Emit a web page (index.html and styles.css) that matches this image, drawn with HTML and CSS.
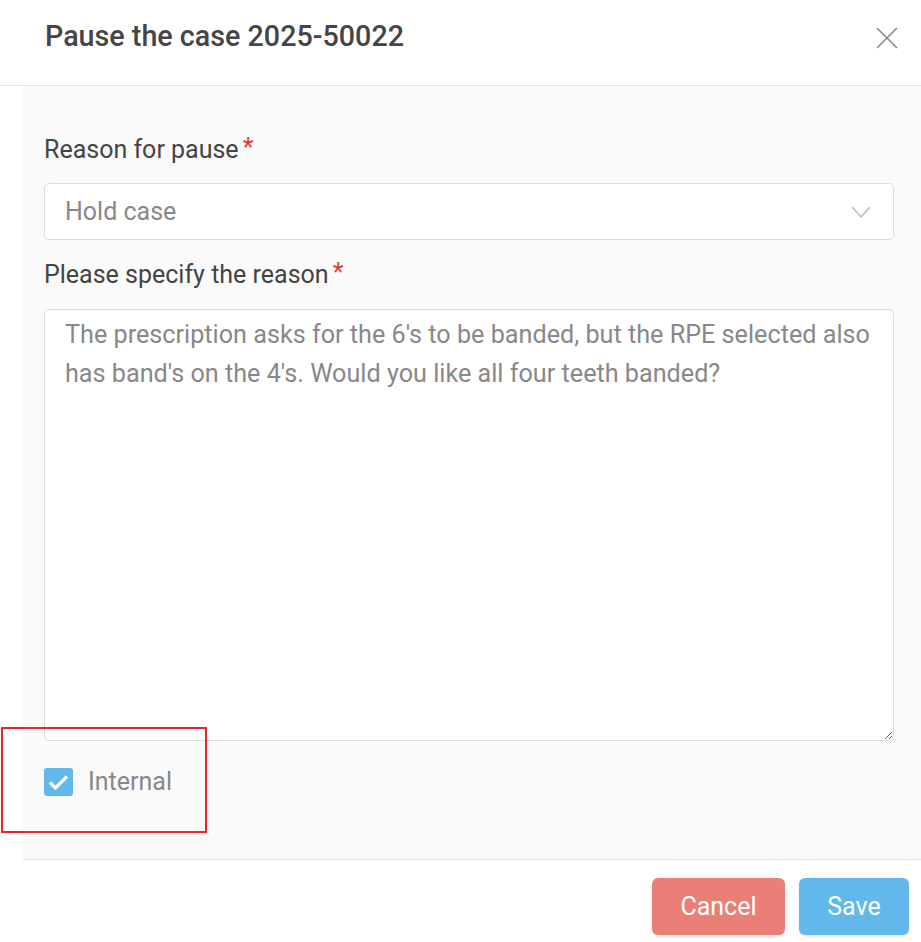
FILE: index.html
```html
<!DOCTYPE html>
<html>
<head>
<meta charset="utf-8">
<link rel="stylesheet" href="styles.css">
</head>
<body>
<div class="modal">
  <div class="header">
    <h1 class="title">Pause the case 2025-50022</h1>
    <span class="close" aria-label="Close">
      <svg width="22" height="22" viewBox="0 0 22 22"><path d="M1 1 L21 21 M21 1 L1 21" stroke="#888" stroke-width="1.6" fill="none"/></svg>
    </span>
  </div>
  <div class="body">
    <label class="label label-first">Reason for pause<span class="req">*</span></label>
    <div class="select">
      <span class="select-value">Hold case</span>
      <svg class="chevron" width="20" height="12" viewBox="0 0 20 12"><path d="M1 1 L10 11 L19 1" stroke="#bbb" stroke-width="1.4" fill="none"/></svg>
    </div>
    <label class="label label-second">Please specify the reason<span class="req">*</span></label>
    <textarea class="textarea">The prescription asks for the 6's to be banded, but the RPE selected also has band's on the 4's. Would you like all four teeth banded?</textarea>
    <div class="check-row">
      <span class="checkbox">
        <svg width="29" height="28" viewBox="0 0 29 28"><path d="M6 14.5 L11.5 20 L23 8.5" stroke="#fff" stroke-width="3.2" fill="none"/></svg>
      </span>
      <span class="check-label">Internal</span>
    </div>
  </div>
  <div class="footer">
    <button class="btn btn-cancel">Cancel</button>
    <button class="btn btn-save">Save</button>
  </div>
  <div class="highlight"></div>
</div>
</body>
</html>
```
FILE: styles.css
```css
html, body {
  margin: 0;
  padding: 0;
  background: #fff;
}
body {
  font-family: Roboto, "Liberation Sans", sans-serif;
  width: 921px;
  height: 942px;
  overflow: hidden;
}
.modal {
  position: relative;
  width: 921px;
}
.header {
  display: flex;
  align-items: flex-start;
  justify-content: space-between;
  padding: 22px 23px 0 45px;
  border-bottom: 1px solid #e6e6e6;
  box-sizing: content-box;
  height: 63px;
}
.title {
  margin: 0;
  font-size: 28.7px;
  font-weight: 500;
  color: #454545;
  line-height: 29px;
}
.close {
  display: flex;
  margin-top: 5px;
}
.body {
  margin-left: 23px;
  background: #fafafa;
  padding: 49px 27px 63px 21px;
  display: flex;
  flex-direction: column;
  border-bottom: 1px solid #e6e6e6;
}
.label {
  font-size: 25px;
  line-height: 29px;
  color: #444;
  display: block;
}
.label-first {
  margin-bottom: 19px;
}
.label-second {
  margin-top: 20px;
  margin-bottom: 20px;
}
.req {
  color: #e53935;
  margin-left: 4px;
  position: relative;
  top: -2px;
}
.select {
  height: 57px;
  box-sizing: border-box;
  border: 1px solid #dcdcdc;
  border-radius: 5px;
  background: #fff;
  display: flex;
  align-items: center;
  justify-content: space-between;
  padding: 0 22px 0 20px;
}
.select-value {
  font-size: 25px;
  color: #888;
}
.textarea {
  display: block;
  height: 432px;
  box-sizing: border-box;
  border: 1px solid #dcdcdc;
  border-radius: 5px;
  background: #fff;
  font-family: Roboto, "Liberation Sans", sans-serif;
  font-size: 25.2px;
  line-height: 38.5px;
  color: #888;
  padding: 6px 18px 6px 20px;
  margin: 0;
  resize: vertical;
  outline: none;
}
.check-row {
  margin-top: 26px;
  display: flex;
  align-items: center;
  gap: 15px;
}
.checkbox {
  width: 29px;
  height: 28px;
  border-radius: 3px;
  background: #62b8ea;
  display: flex;
}
.check-label {
  font-size: 25px;
  line-height: 29px;
  color: #888;
}
.footer {
  display: flex;
  justify-content: flex-end;
  gap: 14px;
  padding: 18px 12px 0 0;
}
.btn {
  height: 57px;
  border: none;
  border-radius: 6px;
  color: #fff;
  font-family: Roboto, "Liberation Sans", sans-serif;
  font-size: 25px;
  cursor: pointer;
  box-shadow: 0 2px 3px rgba(0, 0, 0, 0.08);
}
.btn-cancel {
  width: 133px;
  background: #ea7f77;
}
.btn-save {
  width: 110px;
  background: #62b8ea;
}
.highlight {
  position: absolute;
  left: 1px;
  top: 727px;
  width: 206px;
  height: 106px;
  box-sizing: border-box;
  border: 2px solid #e8262c;
}
```
